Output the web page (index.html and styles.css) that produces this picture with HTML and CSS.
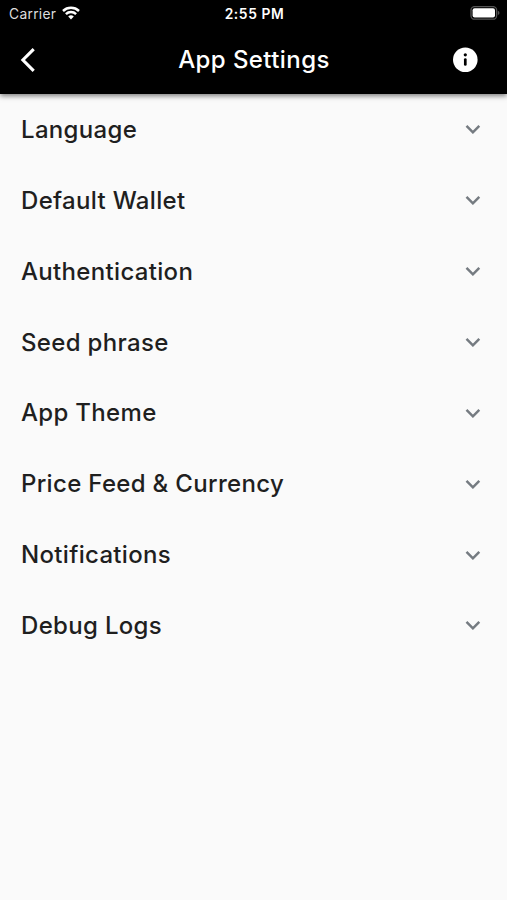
FILE: index.html
```html
<!DOCTYPE html>
<html lang="en">
<head>
<meta charset="utf-8">
<title>App Settings</title>
<link rel="stylesheet" href="styles.css">
</head>
<body>
<header class="header">
  <div class="status">
    <div class="carrier"><span>Carrier</span>
      <svg class="wifi" width="18" height="14" viewBox="0 0 18 14"><path d="M9 13.4 6.2 10.5a4 4 0 0 1 5.6 0z" fill="#fff"/><path d="M3.9 8.1a7.4 7.4 0 0 1 10.2 0M1 5a11.8 11.8 0 0 1 16 0" fill="none" stroke="#fff" stroke-width="2.5"/></svg>
    </div>
    <span class="time">2:55 PM</span>
    <svg class="battery" width="30" height="14" viewBox="0 0 30 14"><rect x="1" y=".6" width="25.6" height="12.6" rx="3.5" fill="none" stroke="#555" stroke-width="1.3"/><rect x="2.6" y="2.2" width="22.4" height="9.4" rx="2" fill="#fff"/><path d="M27.8 4.7q1.7.6 1.7 2.2T27.8 9.1z" fill="#555"/></svg>
  </div>
  <div class="bar">
    <svg class="back" width="16" height="26" viewBox="0 0 16 26"><path d="M13.7 2.2 2.9 13l10.8 10.8" fill="none" stroke="#fff" stroke-width="3.1"/></svg>
    <h1 class="title">App Settings</h1>
    <svg class="info" width="26" height="26" viewBox="0 0 26 26"><circle cx="13.3" cy="12.8" r="12.3" fill="#fff"/><circle cx="13.3" cy="7.8" r="1.6"/><path d="M13.3 12.6v4.8" fill="none" stroke="#000" stroke-width="2.7" stroke-linecap="round"/></svg>
  </div>
</header>
<main class="list">
  <div class="row"><span>Language</span><svg class="chevron" viewBox="0 0 16 10"><path d="m1.5 1.9 6.4 6.4 6.4-6.4"/></svg></div>
  <div class="row"><span>Default Wallet</span><svg class="chevron" viewBox="0 0 16 10"><path d="m1.5 1.9 6.4 6.4 6.4-6.4"/></svg></div>
  <div class="row"><span>Authentication</span><svg class="chevron" viewBox="0 0 16 10"><path d="m1.5 1.9 6.4 6.4 6.4-6.4"/></svg></div>
  <div class="row"><span>Seed phrase</span><svg class="chevron" viewBox="0 0 16 10"><path d="m1.5 1.9 6.4 6.4 6.4-6.4"/></svg></div>
  <div class="row"><span>App Theme</span><svg class="chevron" viewBox="0 0 16 10"><path d="m1.5 1.9 6.4 6.4 6.4-6.4"/></svg></div>
  <div class="row"><span>Price Feed &amp; Currency</span><svg class="chevron" viewBox="0 0 16 10"><path d="m1.5 1.9 6.4 6.4 6.4-6.4"/></svg></div>
  <div class="row"><span>Notifications</span><svg class="chevron" viewBox="0 0 16 10"><path d="m1.5 1.9 6.4 6.4 6.4-6.4"/></svg></div>
  <div class="row"><span>Debug Logs</span><svg class="chevron" viewBox="0 0 16 10"><path d="m1.5 1.9 6.4 6.4 6.4-6.4"/></svg></div>
</main>
</body>
</html>
```
FILE: styles.css
```css
* { box-sizing: border-box; }
body { margin: 0; min-height: 900px; background: #fafafa; color: #1f1f1f; font-family: Inter, "Liberation Sans", sans-serif; }
.header { height: 94px; background: #000; color: #fff; box-shadow: 0 2px 5px rgba(0,0,0,.5); }
.status { height: 26px; display: grid; grid-template-columns: 1fr auto 1fr; align-items: center; padding: 0 7px 0 9px; font-size: 13.8px; }
.carrier { display: flex; align-items: center; gap: 6px; color: #ddd; letter-spacing: .3px; }
.carrier span, .time { padding-top: 2px; }
.time { font-weight: 600; letter-spacing: .6px; }
.battery { justify-self: end; }
.bar { height: 67px; display: grid; grid-template-columns: 1fr auto 1fr; align-items: center; padding: 0 29px 0 20px; }
.title { margin: 0 -5px 0 5px; padding-top: 1px; font-size: 24px; line-height: 30px; font-weight: 500; letter-spacing: .42px; }
.info { justify-self: end; }
.row { height: 70.86px; display: flex; align-items: center; justify-content: space-between; padding: 0 26px 0 21px; font-size: 24px; font-weight: 500; letter-spacing: .32px; }
.chevron { width: 16px; height: 10px; fill: none; stroke: #757b81; stroke-width: 2.5; }
```
